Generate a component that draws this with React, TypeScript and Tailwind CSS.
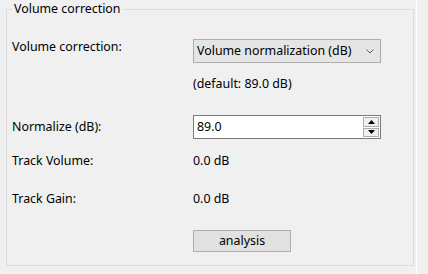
export default function App() {
    return (
        <div className="flex h-[274px] w-[428px] bg-[#f0f0f0] font-['Noto_Sans',sans-serif] text-[12.4px] text-black">
            {/* Group box */}
            <div className="relative ml-[6px] mt-[9px] h-[257px] w-[408px] border border-[#dcdcdc] pl-[5px] pt-[29px]">
                <div className="absolute -top-[9px] left-[5px] bg-[#f0f0f0] px-[2px] leading-[16px]">
                    Volume correction
                </div>

                {/* Mode select */}
                <div className="flex h-[24px]">
                    <div className="w-[181px] leading-[16px]">Volume correction:</div>
                    <div className="flex h-[24px] w-[188px] items-center justify-between border border-[#adadad] bg-[#e5e5e5] pl-[3px] pr-[6px]">
                        <span>Volume normalization (dB)</span>
                        <svg width="8" height="5" viewBox="0 0 8 5" fill="none">
                            <path d="M0.5 0.5 L4 4 L7.5 0.5" stroke="#606060" strokeWidth="1" />
                        </svg>
                    </div>
                </div>

                <div className="mt-[13px] pl-[181px] leading-[16px]">(default: 89.0 dB)</div>

                {/* Normalize spin box */}
                <div className="mt-[23px] flex h-[24px] items-center">
                    <div className="w-[181px] leading-[16px]">Normalize (dB):</div>
                    <div className="flex h-[24px] w-[188px] border border-[#7a7a7a] bg-white">
                        <div className="flex flex-1 items-center pl-[3px]">89.0</div>
                        <div className="flex w-[18px] flex-col gap-px p-px">
                            <div className="flex flex-1 items-center justify-center border border-[#adadad] bg-[#f0f0f0]">
                                <svg width="7" height="4" viewBox="0 0 7 4">
                                    <path d="M0 4 L3.5 0 L7 4 Z" fill="#000" />
                                </svg>
                            </div>
                            <div className="flex flex-1 items-center justify-center border border-[#adadad] bg-[#f0f0f0]">
                                <svg width="7" height="4" viewBox="0 0 7 4">
                                    <path d="M0 0 L7 0 L3.5 4 Z" fill="#000" />
                                </svg>
                            </div>
                        </div>
                    </div>
                </div>

                <div className="mt-[14px] flex leading-[16px]">
                    <div className="w-[181px]">Track Volume:</div>
                    <div>0.0 dB</div>
                </div>

                <div className="mt-[22px] flex leading-[16px]">
                    <div className="w-[181px]">Track Gain:</div>
                    <div>0.0 dB</div>
                </div>

                <div className="mt-[23px] pl-[181px]">
                    <button className="flex h-[22px] w-[98px] items-center justify-center border border-[#adadad] bg-[#e1e1e1] leading-[16px]">
                        analysis
                    </button>
                </div>
            </div>

            {/* Window edge */}
            <div className="ml-[2px] w-px self-stretch bg-white" />
        </div>
    )
}
